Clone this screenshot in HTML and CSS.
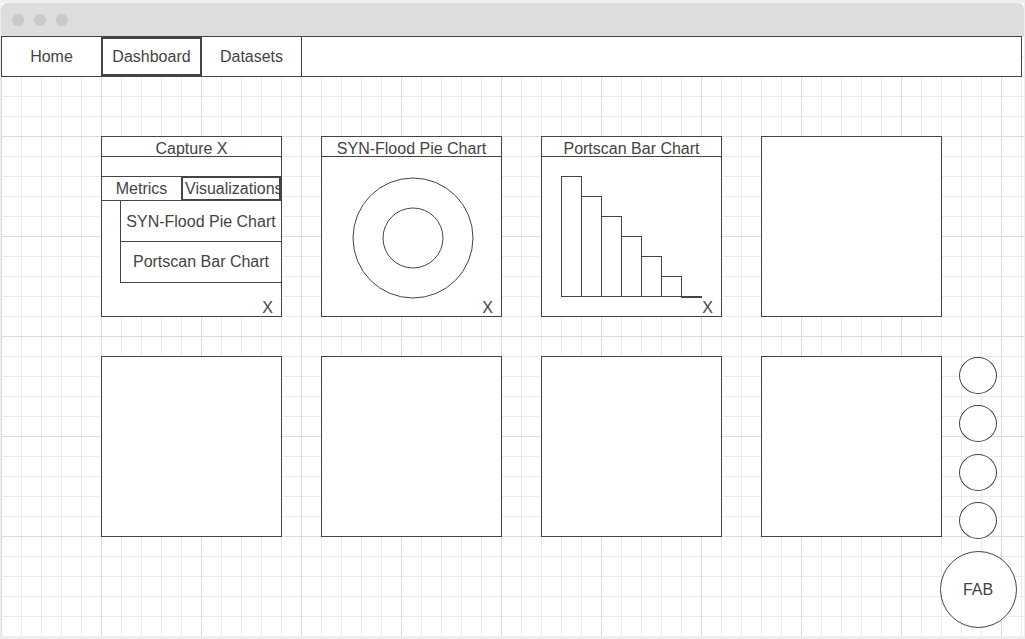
FILE: index.html
```html
<!DOCTYPE html>
<html lang="en">
<head>
<meta charset="utf-8">
<title>Dashboard</title>
<link rel="stylesheet" href="styles.css">
</head>
<body>
<div class="window">
  <div class="titlebar">
    <span class="dot"></span><span class="dot"></span><span class="dot"></span>
  </div>
  <div class="page">
    <nav class="nav">
      <a class="nav-item">Home</a>
      <a class="nav-item active">Dashboard</a>
      <a class="nav-item">Datasets</a>
    </nav>
    <main class="board">
      <section class="card">
        <div class="card-head">Capture X</div>
        <div class="capture-blank"></div>
        <div class="tabs">
          <div class="tab">Metrics</div>
          <div class="tab tab-active">Visualizations</div>
        </div>
        <ul class="vis-list">
          <li class="vis-item vis-item-first">SYN-Flood Pie Chart</li>
          <li class="vis-item">Portscan Bar Chart</li>
        </ul>
        <span class="close">X</span>
      </section>
      <section class="card">
        <div class="card-head">SYN-Flood Pie Chart</div>
        <div class="card-body">
          <svg class="chart" width="179" height="159" viewBox="0 0 179 159">
            <circle cx="91" cy="81" r="60" fill="none" stroke="#444" stroke-width="1"/>
            <circle cx="91" cy="81" r="30" fill="none" stroke="#444" stroke-width="1"/>
          </svg>
        </div>
        <span class="close">X</span>
      </section>
      <section class="card">
        <div class="card-head">Portscan Bar Chart</div>
        <div class="card-body">
          <svg class="chart" width="179" height="159" viewBox="0 0 179 159">
            <g fill="none" stroke="#444" stroke-width="1">
              <rect x="19.5" y="19.5" width="20" height="120"/>
              <rect x="39.5" y="39.5" width="20" height="100"/>
              <rect x="59.5" y="59.5" width="20" height="80"/>
              <rect x="79.5" y="79.5" width="20" height="60"/>
              <rect x="99.5" y="99.5" width="20" height="40"/>
              <rect x="119.5" y="119.5" width="20" height="20"/>
            </g>
            <line x1="139" y1="140" x2="160" y2="140" stroke="#444" stroke-width="2"/>
          </svg>
        </div>
        <span class="close">X</span>
      </section>
      <section class="card"></section>
      <section class="card"></section>
      <section class="card"></section>
      <section class="card"></section>
      <section class="card"></section>
    </main>
    <div class="fab-stack">
      <button class="mini-fab"></button>
      <button class="mini-fab"></button>
      <button class="mini-fab mini-fab-shift"></button>
      <button class="mini-fab"></button>
      <button class="fab">FAB</button>
    </div>
  </div>
</div>
</body>
</html>
```

FILE: styles.css
```css
html, body {
  margin: 0;
  padding: 0;
}

body {
  background: #eeeeee;
  font-family: "Liberation Sans", Arial, sans-serif;
  font-size: 16px;
  color: #444;
}

.window {
  margin: 3px 0 0 1px;
  width: 1023px;
  background: #fff;
}

.titlebar {
  height: 33px;
  background: #dddddd;
  border-radius: 6px 6px 0 0;
  display: flex;
  align-items: center;
  gap: 10px;
  padding-left: 11px;
  box-sizing: border-box;
}

.dot {
  width: 12px;
  height: 12px;
  border-radius: 50%;
  background: #c9c9c9;
}

.page {
  position: relative;
  height: 600px;
  background-color: #fff;
  background-image:
    linear-gradient(to right, #dcdcdc 1px, transparent 1px),
    linear-gradient(to bottom, #dcdcdc 1px, transparent 1px),
    linear-gradient(to right, #ebebeb 1px, transparent 1px),
    linear-gradient(to bottom, #ebebeb 1px, transparent 1px);
  background-size: 100px 100px, 100px 100px, 20px 20px, 20px 20px;
  background-position: 0 0;
}

.nav {
  display: flex;
  width: 1021px;
  height: 41px;
  box-sizing: border-box;
  border: 1px solid #444;
  background: #fff;
}

.nav-item {
  width: 100px;
  box-sizing: border-box;
  border-right: 1px solid #444;
  display: flex;
  align-items: center;
  justify-content: center;
  color: #444;
  background: #fff;
}

.nav-item.active {
  margin-left: -1px;
  width: 101px;
  border-right: none;
  box-shadow: inset 0 0 0 2px #444;
}

.board {
  display: grid;
  grid-template-columns: repeat(4, 181px);
  grid-auto-rows: 181px;
  gap: 39px;
  padding: 59px 0 0 100px;
}

.card {
  position: relative;
  box-sizing: border-box;
  border: 1px solid #444;
  background: #fff;
  display: flex;
  flex-direction: column;
}

.card-head {
  height: 19px;
  line-height: 24px;
  border-bottom: 1px solid #444;
  text-align: center;
  white-space: nowrap;
}

.card-body {
  flex: 1;
}

.chart {
  display: block;
}

.close {
  position: absolute;
  right: 8px;
  bottom: -1px;
  line-height: normal;
}

.capture-blank {
  height: 19px;
  border-bottom: 1px solid #444;
}

.tabs {
  display: flex;
  margin-top: -1px;
  height: 25px;
}

.tab {
  box-sizing: border-box;
  width: 79px;
  border-top: 1px solid #444;
  border-bottom: 1px solid #444;
  display: flex;
  align-items: center;
  justify-content: center;
  white-space: nowrap;
}

.tab-active {
  display: block;
  width: 100px;
  border: 2px solid #444;
  padding-left: 2px;
  line-height: 21px;
  overflow: hidden;
}

.vis-list {
  list-style: none;
  margin: 0 0 0 18px;
  padding: 0;
  border-left: 1px solid #444;
}

.vis-item {
  height: 40px;
  border-bottom: 1px solid #444;
  display: flex;
  align-items: center;
  justify-content: center;
  white-space: nowrap;
}

.vis-item-first {
  padding-top: 1px;
  height: 39px;
}

.fab-stack {
  position: absolute;
  left: 938px;
  top: 321px;
  width: 78px;
  display: flex;
  flex-direction: column;
  align-items: center;
  gap: 11px;
}

.mini-fab {
  width: 38px;
  height: 37px;
  border-radius: 50%;
  border: 1px solid #444;
  background: #fff;
  padding: 0;
}

.mini-fab-shift {
  margin-top: 1px;
}

.fab {
  margin-top: 1px;
  width: 77px;
  height: 77px;
  border-radius: 50%;
  border: 1px solid #444;
  background: #fff;
  padding: 0;
  font-family: "Liberation Sans", Arial, sans-serif;
  font-size: 16px;
  color: #444;
}
```
